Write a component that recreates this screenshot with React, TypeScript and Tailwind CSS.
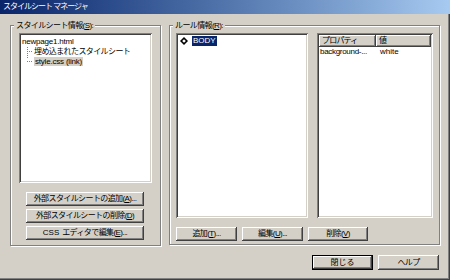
import React from "react";

const raised =
  "bg-[#d4d0c8] shadow-[inset_-1px_-1px_0_#404040,inset_1px_1px_0_#ffffff,inset_-2px_-2px_0_#808080]";
const sunken =
  "bg-white shadow-[inset_1px_1px_0_#808080,inset_-1px_-1px_0_#ffffff,inset_2px_2px_0_#404040,inset_-2px_-2px_0_#d4d0c8]";
const etched =
  "border border-[#808080] shadow-[inset_1px_1px_0_#ffffff,1px_1px_0_#ffffff]";

function Btn({ children, w, h = "h-[14px]", extra = "" }: { children: React.ReactNode; w: string; h?: string; extra?: string }) {
  return (
    <div className={`${raised} ${w} ${h} ${extra} flex items-center justify-center text-[8px] tracking-[-0.6px] text-black leading-none`}>
      {children}
    </div>
  );
}

function U({ c }: { c: string }) {
  return <span className="underline underline-offset-1">{c}</span>;
}

export default function App() {
  return (
    <div className="w-[450px] h-[280px] bg-[#d4d0c8] flex flex-col font-['Liberation_Sans','Noto_Sans_CJK_JP',sans-serif] shadow-[inset_-1px_-1px_0_#404040,inset_-2px_-2px_0_#808080] overflow-hidden">
      {/* Title bar */}
      <div className="h-[14px] bg-linear-to-r from-[#0a246a] to-[#a6caf0] flex items-center pl-[3px] text-white text-[8px] tracking-[-1px] leading-none">
        スタイルシート マネージャ
      </div>

      {/* Group boxes */}
      <div className="flex mt-[11px]">
        {/* Left group */}
        <div className={`relative ml-[10px] w-[151px] h-[221px] ${etched} pl-[8px] pt-[7px]`}>
          <div className="absolute left-[3px] top-[-6px] bg-[#d4d0c8] px-[2px] text-[8px] tracking-[-0.6px] leading-[11px] text-black">
            スタイルシート情報(<U c="S" />):
          </div>
          <div className={`${sunken} w-[133px] h-[150px] relative pt-[4px] pl-[2px] text-[8px] leading-[10px] text-black`}>
            <div className="pl-[1px] tracking-[-0.2px]">newpage1.html</div>
            <div className="relative pl-[13px] tracking-[-0.6px]">
              埋め込まれたスタイルシート
            </div>
            <div className="relative pl-[13px]">
              <span className="bg-[#d4d0c8] px-[1px] tracking-[-0.2px]">style.css (link)</span>
            </div>
            {/* tree lines */}
            <div className="absolute left-[8px] top-[14px] h-[11px] border-l border-dotted border-[#808080]" />
            <div className="absolute left-[8px] top-[18px] w-[5px] border-t border-dotted border-[#808080]" />
            <div className="absolute left-[8px] top-[28px] w-[5px] border-t border-dotted border-[#808080]" />
          </div>
          <div className="flex flex-col gap-[3px] mt-[9px] ml-[7px]">
            <Btn w="w-[118px]">外部スタイルシートの追加(<U c="A" />)...</Btn>
            <Btn w="w-[118px]">外部スタイルシートの削除(<U c="D" />)</Btn>
            <Btn w="w-[118px]">
              <span className="tracking-[0px] mr-[3px]">CSS</span>エディタで編集(<U c="E" />)...
            </Btn>
          </div>
        </div>

        {/* Right group */}
        <div className={`relative ml-[8px] w-[271px] h-[220px] ${etched} pl-[6px] pt-[7px]`}>
          <div className="absolute left-[3px] top-[-6px] bg-[#d4d0c8] px-[2px] text-[8px] tracking-[-0.6px] leading-[11px] text-black">
            ルール情報(<U c="R" />):
          </div>
          <div className="flex gap-[9px]">
            <div className={`${sunken} w-[132px] h-[185px] pt-[3px] pl-[3px]`}>
              <div className="flex items-center h-[10px]">
                <svg width="8" height="8" viewBox="0 0 8 8" className="ml-[1px]">
                  <polygon points="4,0 8,4 4,8 0,4" fill="#000" />
                  <polygon points="4,2.2 5.8,4 4,5.8 2.2,4" fill="#fff" />
                </svg>
                <span className="ml-[4px] bg-[#0a246a] text-white text-[8px] leading-[10px] px-[1px]">BODY</span>
              </div>
            </div>
            <div className={`${sunken} w-[116px] h-[185px] p-[2px] flex flex-col`}>
              <div className="flex h-[12px] text-[8px] leading-none text-black">
                <div className={`${raised} w-[57px] flex items-center pl-[3px] tracking-[-0.8px]`}>プロパティ</div>
                <div className={`${raised} flex-1 flex items-center pl-[3px]`}>値</div>
              </div>
              <div className="flex h-[10px] items-center text-[8px] leading-none text-black">
                <div className="w-[57px] pl-[1px] tracking-[-0.3px] whitespace-nowrap overflow-hidden">background-...</div>
                <div className="pl-[4px]">white</div>
              </div>
            </div>
          </div>
          <div className="flex gap-[5px] mt-[9px]">
            <Btn w="w-[61px]">追加(<U c="T" />)...</Btn>
            <Btn w="w-[61px]">編集(<U c="U" />)...</Btn>
            <Btn w="w-[60px]">削除(<U c="V" />)</Btn>
          </div>
        </div>
      </div>

      {/* Bottom buttons */}
      <div className="flex gap-[5px] mt-[9px] ml-[312px]">
        <div className="w-[61px] h-[15px] border border-black flex">
          <div className={`${raised} flex-1 flex items-center justify-center text-[8px] leading-none text-black`}>閉じる</div>
        </div>
        <Btn w="w-[61px]" h="h-[15px]">ヘルプ</Btn>
      </div>
    </div>
  );
}
